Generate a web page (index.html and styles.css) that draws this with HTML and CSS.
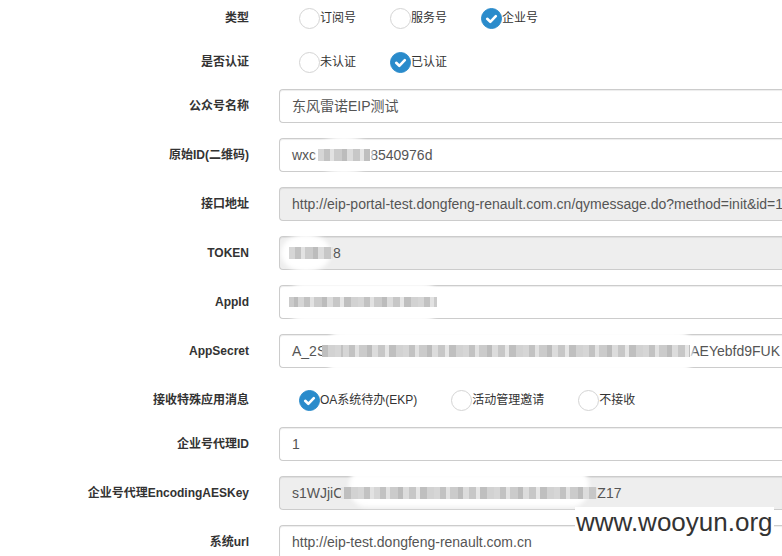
FILE: index.html
```html
<!DOCTYPE html>
<html lang="zh-CN">
<head>
<meta charset="utf-8">
<title>公众号设置</title>
<link rel="stylesheet" href="styles.css">
</head>
<body>
<form class="form">
  <div class="row">
    <label class="lbl">类型</label>
    <div class="radios">
      <span class="opt"><span class="rb"></span><span class="ot">订阅号</span></span>
      <span class="opt"><span class="rb"></span><span class="ot">服务号</span></span>
      <span class="opt"><span class="rb on"><svg viewBox="0 0 21 21" width="21" height="21"><path d="M6.2 10.8 L9.3 13.8 L14.8 8.2" fill="none" stroke="#fff" stroke-width="2.6" stroke-linecap="round" stroke-linejoin="round"/></svg></span><span class="ot">企业号</span></span>
    </div>
  </div>
  <div class="row">
    <label class="lbl">是否认证</label>
    <div class="radios">
      <span class="opt"><span class="rb"></span><span class="ot">未认证</span></span>
      <span class="opt"><span class="rb on"><svg viewBox="0 0 21 21" width="21" height="21"><path d="M6.2 10.8 L9.3 13.8 L14.8 8.2" fill="none" stroke="#fff" stroke-width="2.6" stroke-linecap="round" stroke-linejoin="round"/></svg></span><span class="ot">已认证</span></span>
    </div>
  </div>
  <div class="row">
    <label class="lbl">公众号名称</label>
    <div class="ctl">东风雷诺EIP测试</div>
  </div>
  <div class="row">
    <label class="lbl">原始ID(二维码)</label>
    <div class="ctl">wxc<span class="mz mz-id"></span>8540976d</div>
  </div>
  <div class="row">
    <label class="lbl">接口地址</label>
    <div class="ctl dis">http://eip-portal-test.dongfeng-renault.com.cn/qymessage.do?method=init&amp;id=1</div>
  </div>
  <div class="row">
    <label class="lbl">TOKEN</label>
    <div class="ctl dis"><span class="mz mz-token"></span>8</div>
  </div>
  <div class="row">
    <label class="lbl">AppId</label>
    <div class="ctl"><span class="mz mz-appid"></span></div>
  </div>
  <div class="row">
    <label class="lbl">AppSecret</label>
    <div class="ctl">A_2S<span class="mz mz-secret"></span>AEYebfd9FUK</div>
  </div>
  <div class="row">
    <label class="lbl">接收特殊应用消息</label>
    <div class="radios">
      <span class="opt"><span class="rb on"><svg viewBox="0 0 21 21" width="21" height="21"><path d="M6.2 10.8 L9.3 13.8 L14.8 8.2" fill="none" stroke="#fff" stroke-width="2.6" stroke-linecap="round" stroke-linejoin="round"/></svg></span><span class="ot">OA系统待办(EKP)</span></span>
      <span class="opt"><span class="rb"></span><span class="ot">活动管理邀请</span></span>
      <span class="opt"><span class="rb"></span><span class="ot">不接收</span></span>
    </div>
  </div>
  <div class="row">
    <label class="lbl">企业号代理ID</label>
    <div class="ctl">1</div>
  </div>
  <div class="row">
    <label class="lbl">企业号代理EncodingAESKey</label>
    <div class="ctl dis">s1WJjiC<span class="mz mz-aes"></span>Z17</div>
  </div>
  <div class="row">
    <label class="lbl">系统url</label>
    <div class="ctl">http://eip-test.dongfeng-renault.com.cn</div>
  </div>
</form>
<div class="watermark">www.wooyun.org</div>
</body>
</html>
```

FILE: styles.css
```css
html, body {
  margin: 0;
  overflow: hidden;
  background: #fff;
}
body {
  font-family: "Liberation Sans", "Noto Sans CJK SC", Arial, sans-serif;
  color: #333;
  position: relative;
  height: 556px;
}
.form {
  padding-top: 1px;
}
.row {
  display: grid;
  grid-template-columns: 249px 1fr;
  column-gap: 30px;
  margin-bottom: 15px;
}
.lbl {
  text-align: right;
  font-weight: bold;
  font-size: 12px;
  line-height: 17px;
  padding-top: 9px;
  white-space: nowrap;
}
.radios {
  display: flex;
  gap: 34px;
  height: 29px;
  box-sizing: border-box;
  padding: 7px 0 0 20px;
}
.opt {
  display: flex;
  align-items: center;
  height: 21px;
  font-size: 12px;
  color: #333;
  white-space: nowrap;
}
.ot {
  padding-bottom: 4px;
}
.rb {
  width: 21px;
  height: 21px;
  box-sizing: border-box;
  border: 1px solid #d4d4d4;
  border-radius: 50%;
  background: #fff;
  flex: none;
  position: relative;
}
.rb.on {
  background: #2a8bcb;
  border-color: #2a8bcb;
}
.rb svg {
  position: absolute;
  left: -1px;
  top: -1px;
}
.ctl {
  height: 34px;
  box-sizing: border-box;
  border: 1px solid #ccc;
  border-right: 0;
  border-radius: 4px 0 0 4px;
  padding: 6px 0 6px 12px;
  font-size: 14px;
  line-height: 20px;
  color: #555;
  background: #fff;
  box-shadow: inset 0 1px 1px rgba(0,0,0,.075);
  white-space: nowrap;
  overflow-x: clip;
  overflow-y: visible;
  min-width: 0;
}
.ctl.dis {
  background: #eee;
}
.mz {
  position: relative;
  display: inline-block;
  height: 12px;
  vertical-align: -1px;
}
.mz::before {
  content: "";
  position: absolute;
  left: -3px;
  right: -3px;
  top: -13px;
  bottom: -13px;
  background: rgba(255,255,255,.96);
  border-radius: 18px;
  filter: blur(2px);
}
.mz::after {
  content: "";
  position: absolute;
  inset: 0;
  background: repeating-linear-gradient(90deg,
    #d6d6d6 0 6px, #c2c2c2 6px 12px, #e2e2e2 12px 16px, #cbcbcb 16px 24px,
    #bcbcbc 24px 29px, #dcdcdc 29px 35px, #c7c7c7 35px 42px, #e6e6e6 42px 46px,
    #bfbfbf 46px 53px, #d2d2d2 53px 60px);
}
.mz-id { width: 52px; margin-left: 2px; }
.mz-id::before { border-radius: 50%; top: -13px; bottom: -13px; }
.mz-token { width: 44px; margin-left: -3px; }
.mz-token::before { border-radius: 50%; left: -8px; right: 2px; top: -13px; bottom: -13px; }
.mz-appid { width: 148px; height: 10px; margin-left: -3px; vertical-align: 0; }
.mz-appid::after { background-position: 9px 0; }
.mz-appid::before { top: -14px; bottom: -15px; }
.mz-secret { width: 368px; margin-left: -4px; }
.mz-secret::after { background-position: 21px 0; }
.mz-secret::before { top: -15px; bottom: -18px; left: 4px; }
.mz-aes { width: 256px; margin-left: -2px; }
.mz-aes::after { background-position: 33px 0; }
.mz-aes::before { top: -20px; bottom: -8px; left: 8px; right: 8px; }
.watermark {
  position: absolute;
  left: 575px;
  top: 507px;
  font-family: "Liberation Sans", Arial, sans-serif;
  font-size: 26px;
  line-height: 30px;
  color: #333;
  background: #fff;
  padding: 0 1px;
}
```
